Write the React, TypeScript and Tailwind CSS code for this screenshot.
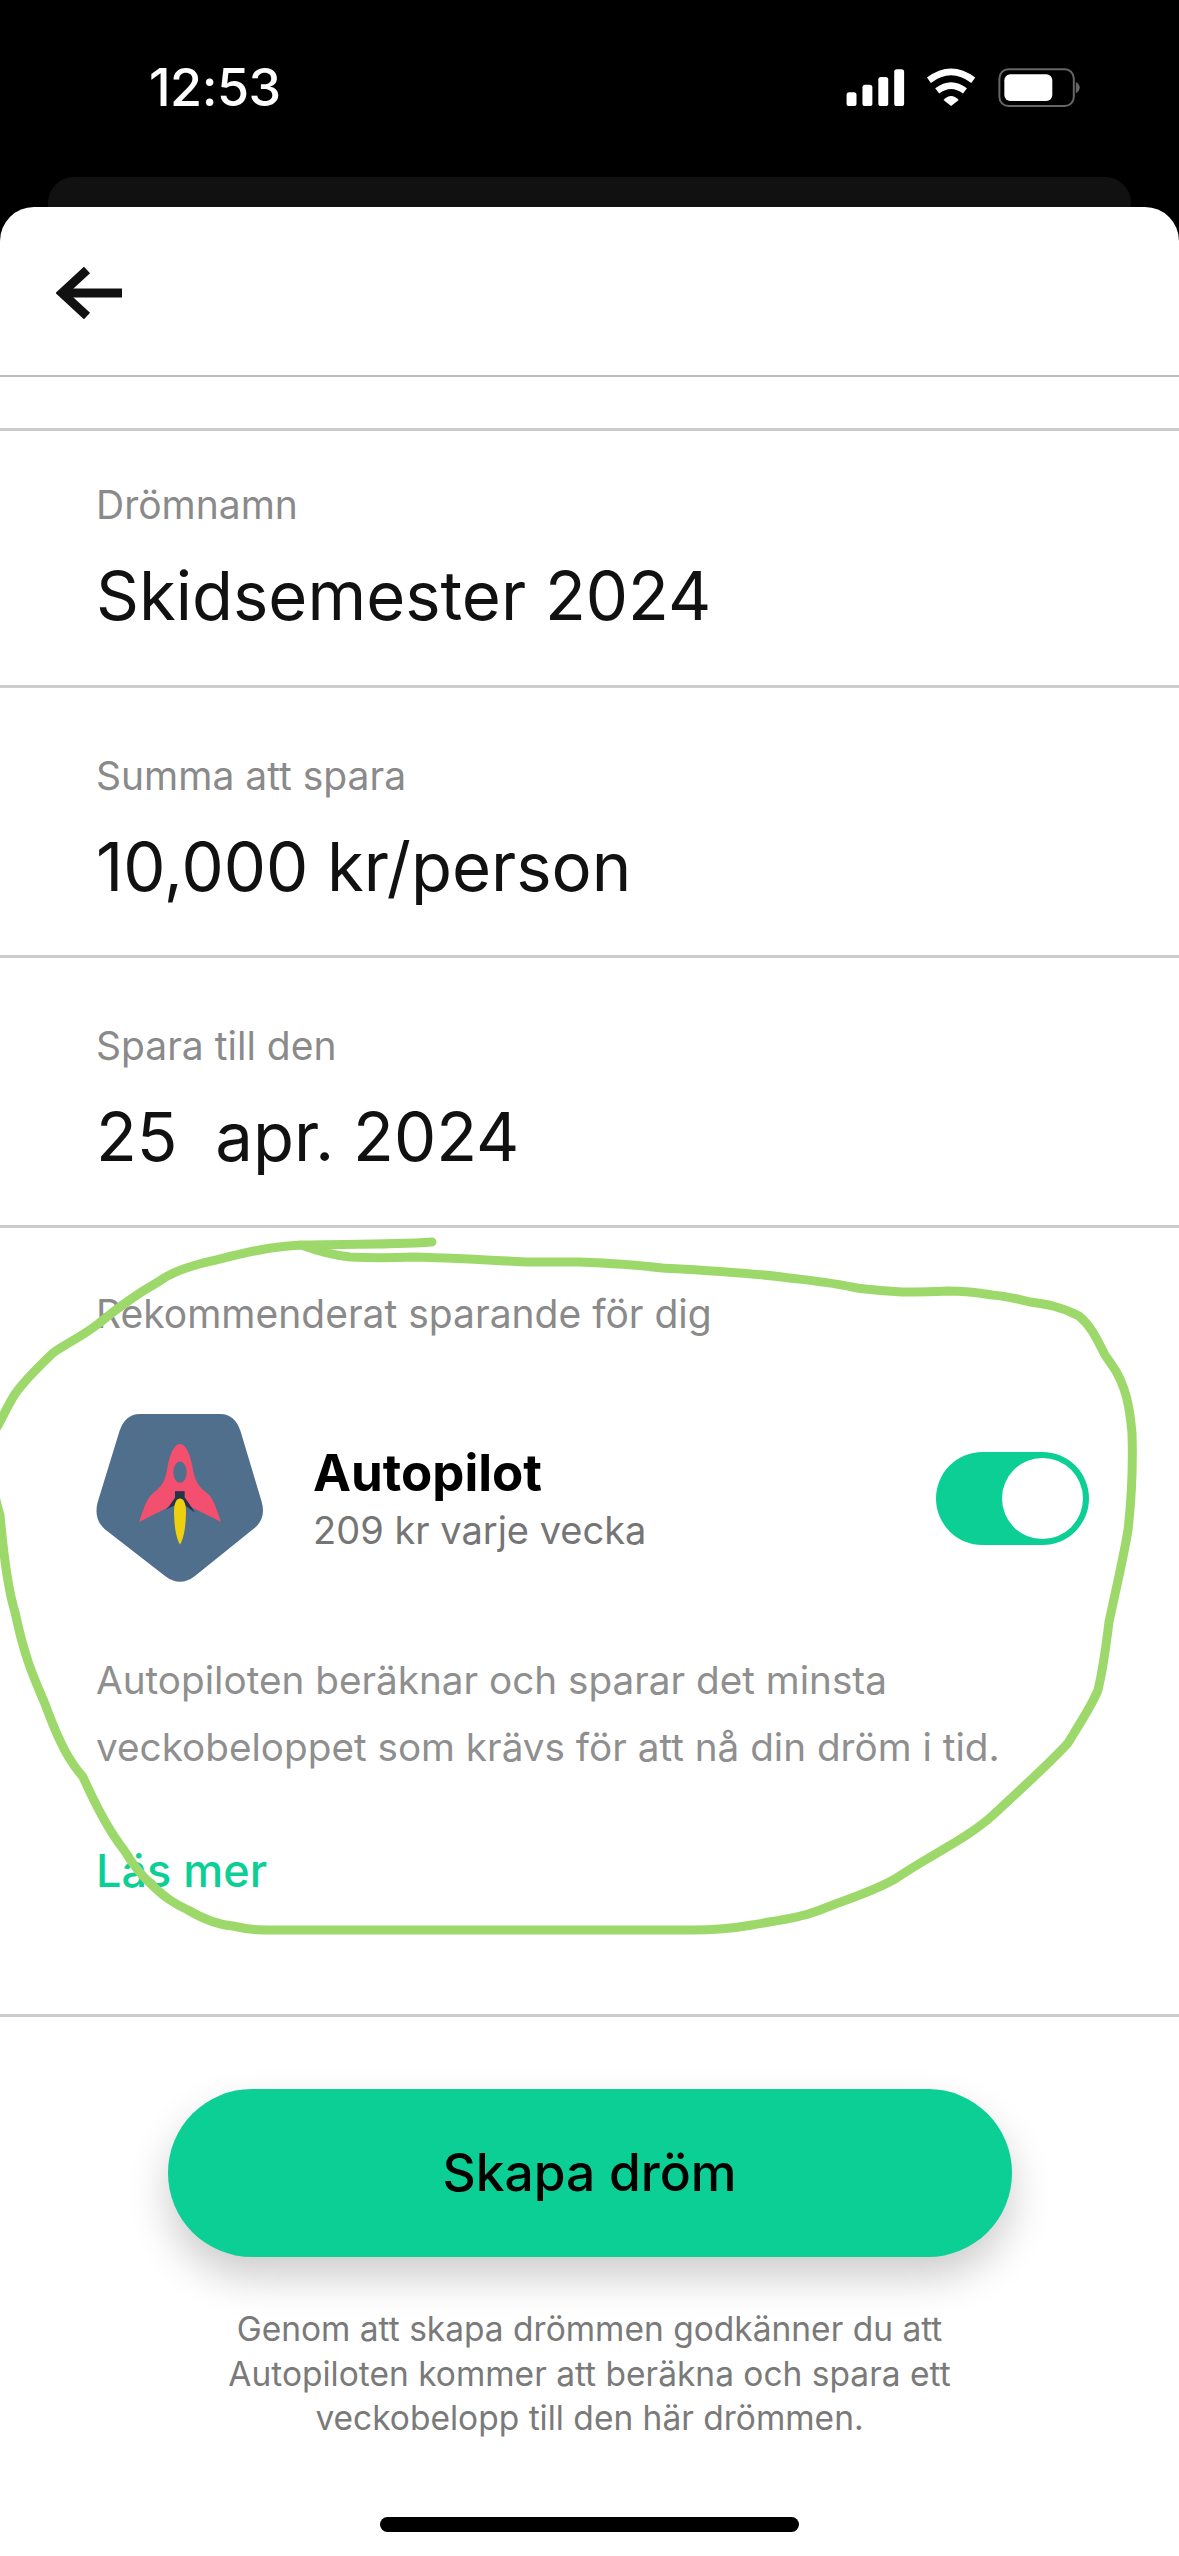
import React from 'react';

const font = { fontFamily: 'Inter, "Noto Sans", sans-serif' };

const StatusIcons = () => (
  <svg width="240" height="43" viewBox="190 80 720 130">
    <rect x="198" y="156" width="30" height="42" rx="8" fill="#fff" />
    <rect x="246" y="134" width="30" height="64" rx="8" fill="#fff" />
    <rect x="294" y="110" width="30" height="88" rx="8" fill="#fff" />
    <rect x="342" y="87" width="30" height="111" rx="8" fill="#fff" />
    <path d="M447 120 Q514 70 581 120" fill="none" stroke="#fff" strokeWidth="20" />
    <path d="M472 152 Q514 120 556 152" fill="none" stroke="#fff" strokeWidth="20" />
    <path d="M491 180 Q514 156 537 180 L514 198 Z" fill="#fff" />
    <rect x="660" y="87" width="225" height="111" rx="27" fill="none" stroke="#666" strokeWidth="6" />
    <rect x="675" y="102" width="145" height="81" rx="18" fill="#fff" />
    <path d="M891 125 Q903 132 903 142 Q903 152 891 160 Z" fill="#666" />
  </svg>
);

const BackArrow = () => (
  <svg width="66" height="52" viewBox="0 0 66 52">
    <path d="M66 26 H6" fill="none" stroke="#111" strokeWidth="9" />
    <path d="M31 3 L6 26 L31 49" fill="none" stroke="#111" strokeWidth="9" />
  </svg>
);

const RocketBadge = () => (
  <svg width="168" height="168" viewBox="108 98 504 505" className="shrink-0">
    <path d="M240 98 L480 98 Q525 98 542 150 L605 360 Q620 410 585 440 L405 585 Q360 620 315 585 L135 445 Q100 415 112 365 L178 150 Q195 98 240 98 Z" fill="#4f6f8c" />
    <path d="M318 385 L345 345 L375 345 L405 395 L375 372 L345 372 Z" fill="#22344a" />
    <path d="M352 190 Q360 186 368 190 C382 200 392 225 398 260 C405 300 415 315 440 335 C458 350 462 362 484 423 L395 378 L375 350 L345 350 L325 378 L237 423 C250 385 258 355 280 335 C305 315 316 300 322 260 C328 225 338 200 352 190 Z" fill="#f2506e" />
    <ellipse cx="360" cy="273" rx="20" ry="32" fill="#4f6f8c" />
    <rect x="345" y="330" width="29" height="30" fill="#22344a" />
    <path d="M360 490 C346 470 342 420 342 390 C342 365 350 352 360 352 C370 352 378 365 378 390 C378 420 374 470 360 490 Z" fill="#eed00f" />
  </svg>
);

const Scribble = () => (
  <svg width="1179" height="2556" viewBox="0 0 1179 2556" className="absolute left-0 top-0 pointer-events-none">
    <path
      d="M432 1242 C390 1245 340 1244 301 1245 C285 1246 278 1247 271 1248 C245 1252 225 1258 203 1263 C185 1268 172 1272 158 1282 C135 1295 115 1310 98 1324 C80 1338 65 1344 53 1353 C35 1370 25 1380 15 1394 C6 1408 2 1420 -6 1432 C-10 1470 -8 1490 0 1515 C4 1560 8 1590 15 1612 C25 1660 35 1680 45 1704 C60 1745 70 1762 83 1777 C100 1815 112 1835 124 1850 C135 1868 142 1876 150 1883 C165 1898 175 1904 188 1910 C205 1920 218 1925 233 1926 C250 1930 260 1930 274 1930 L692 1930 C715 1930 735 1928 752 1925 C780 1920 800 1918 820 1910 C850 1898 872 1892 895 1879 C930 1855 965 1840 992 1816 C1025 1785 1048 1765 1068 1743 C1085 1715 1092 1705 1098 1690 C1104 1665 1106 1645 1109 1622 C1118 1580 1124 1555 1128 1530 C1132 1495 1133 1465 1132 1433 C1130 1410 1128 1400 1124 1389 C1118 1372 1112 1365 1105 1355 C1095 1335 1090 1325 1079 1316 C1060 1306 1045 1304 1030 1302 C1015 1298 1005 1296 992 1295 C975 1292 960 1291 947 1291 C930 1292 915 1292 902 1292 C885 1291 870 1290 857 1288 C830 1282 805 1280 782 1277 C740 1272 700 1270 662 1268 C630 1264 605 1263 579 1262 C560 1262 545 1262 526 1262 C490 1260 450 1258 414 1257 C390 1258 370 1258 350 1257 C330 1255 315 1250 301 1245"
      fill="none"
      stroke="#9dd96a"
      strokeWidth="9"
      strokeLinecap="round"
      strokeLinejoin="round"
    />
  </svg>
);

const fields = [
  { label: 'Drömnamn', value: 'Skidsemester 2024', spacing: 'pt-[49px] pb-[44px]' },
  { label: 'Summa att spara', value: '10,000 kr/person', spacing: 'pt-[63px] pb-[43px]' },
  { label: 'Spara till den', value: '25  apr. 2024', spacing: 'pt-[63px] pb-[43px]' },
];

export default function App() {
  return (
    <div style={font} className="relative w-[1179px] h-[2556px] bg-black overflow-hidden">
      <div className="h-[177px] flex items-center justify-between pl-[149px] pr-[96px] pb-[1px]">
        <span className="text-white text-[52px] leading-none font-medium tracking-[-0.5px]">12:53</span>
        <StatusIcons />
      </div>
      <div className="mx-[48px] h-[30px] bg-[#111111] rounded-t-[26px]" />

      <div className="bg-white rounded-t-[34px] h-[2349px]">
        <div className="h-[170px] border-b-2 border-[#bdbdbd] flex items-center pl-[56px] pt-[4px]">
          <BackArrow />
        </div>
        <div className="h-[51px]" />

        {fields.map((f) => (
          <div key={f.label} className={`border-t-[3px] border-[#cccccd] pl-[96px] ${f.spacing}`}>
            <div className="text-[39px] leading-[50px] text-[#8a8a8a]">{f.label}</div>
            <div className="mt-[21px] text-[67px] leading-[90px] text-[#111111] whitespace-pre">{f.value}</div>
          </div>
        ))}

        <div className="border-t-[3px] border-[#cccccd] h-[789px] pl-[96px] pr-[90px] pt-[61px]">
          <div className="text-[39px] leading-[50px] text-[#8a8a8a]">Rekommenderat sparande för dig</div>
          <div className="mt-[75px] flex items-center">
            <RocketBadge />
            <div className="ml-[49px] flex-1">
              <div className="text-[51px] leading-[64px] font-bold text-black">Autopilot</div>
              <div className="text-[38px] leading-[50px] text-[#757575]">209 kr varje vecka</div>
            </div>
            <div className="w-[153px] h-[93px] rounded-full bg-[#0bcf94] p-[6px] flex justify-end">
              <div className="w-[81px] h-[81px] rounded-full bg-white" />
            </div>
          </div>
          <div className="mt-[65px] text-[38.7px] leading-[67px] text-[#8f8f8f] whitespace-nowrap">
            <div>Autopiloten beräknar och sparar det minsta</div>
            <div>veckobeloppet som krävs för att nå din dröm i tid.</div>
          </div>
          <div className="mt-[62px] text-[45px] leading-[56px] font-medium text-[#0bcf94]">Läs mer</div>
        </div>

        <div className="border-t-[3px] border-[#cccccd] pt-[72px] flex flex-col items-center">
          <button className="w-[844px] h-[168px] rounded-full bg-[#0bcf94] shadow-[0_20px_40px_rgba(0,0,0,0.2)] text-[51.5px] font-medium text-black">
            Skapa dröm
          </button>
          <div className="mt-[50px] text-center text-[33.5px] leading-[44.5px] text-[#7a7a7a] whitespace-nowrap">
            <div>Genom att skapa drömmen godkänner du att</div>
            <div>Autopiloten kommer att beräkna och spara ett</div>
            <div>veckobelopp till den här drömmen.</div>
          </div>
          <div className="mt-[76px] w-[419px] h-[15px] rounded-full bg-black" />
        </div>
      </div>

      <Scribble />
    </div>
  );
}
